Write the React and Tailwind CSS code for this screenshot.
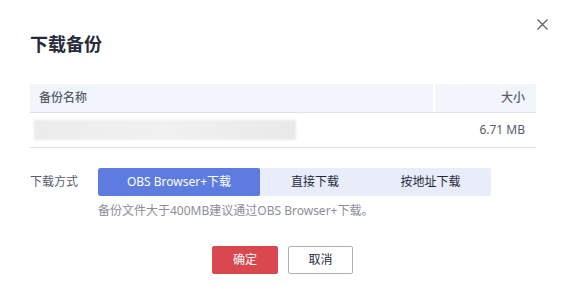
import React, { useState } from 'react';

const methods = [
  { key: 'obs', label: 'OBS Browser+下载', width: 'w-[162px]' },
  { key: 'direct', label: '直接下载', width: 'w-[110px]' },
  { key: 'url', label: '按地址下载', width: 'w-[121px]' }
];

const App = () => {
  const [method, setMethod] = useState('obs');

  return (
    <div className="relative w-[565px] h-[303px] bg-white px-[30px] pt-[32px] font-['Noto_Sans','Noto_Sans_CJK_SC',sans-serif] text-[12px] text-[#252b3a]">
      <button className="absolute right-[17px] top-[18px] w-[12px] h-[12px] flex items-center justify-center text-[#575d6c]">
        <svg width="11" height="11" viewBox="0 0 11 11" fill="none" stroke="currentColor" strokeWidth="1.2">
          <path d="M0.5 0.5L10.5 10.5M10.5 0.5L0.5 10.5" />
        </svg>
      </button>

      <h2 className="text-[18px] leading-[24px] font-bold text-[#252b3a]">下载备份</h2>

      <div className="mt-[28px] w-[506px]">
        <div className="flex h-[29px] bg-[#f2f5fc] border-b border-[#dfe1e6] text-[#575d6c] font-medium">
          <div className="flex-1 flex items-center pl-[9px]">备份名称</div>
          <div className="w-[2px] bg-white" />
          <div className="w-[101px] flex items-center justify-end pr-[11px]">大小</div>
        </div>
        <div className="flex h-[35px] border-b border-[#dfe1e6] items-center">
          <div className="flex-1 pl-[4px]">
            <div className="w-[262px] h-[20px] bg-gradient-to-r from-[#ececec] via-[#f1f1f1] to-[#e9e9e9] blur-[1px]" />
          </div>
          <div className="w-[101px] text-right pr-[11px] text-[#575d6c]">6.71 MB</div>
        </div>
      </div>

      <div className="mt-[20px] flex items-center">
        <div className="w-[68px] text-[#575d6c]">下载方式</div>
        <div className="flex h-[28px] rounded-[2px] bg-[#e9edfa] overflow-hidden">
          {methods.map((m) => (
            <button
              key={m.key}
              onClick={() => setMethod(m.key)}
              className={`${m.width} h-full flex items-center justify-center text-[12px] ${
                method === m.key ? 'bg-[#5e7ce0] text-white rounded-[2px]' : 'text-[#252b3a]'
              }`}
            >
              {m.label}
            </button>
          ))}
        </div>
      </div>
      <p className="ml-[68px] mt-[6px] leading-[18px] text-[#8a8e99]">
        备份文件大于400MB建议通过OBS Browser+下载。
      </p>

      <div className="mt-[26px] flex justify-center gap-[10px]">
        <button className="w-[66px] h-[28px] rounded-[2px] bg-[#d9484f] text-white">确定</button>
        <button className="w-[65px] h-[28px] rounded-[2px] border border-[#adb0b8] bg-white text-[#252b3a]">取消</button>
      </div>
    </div>
  );
};

export default App;
